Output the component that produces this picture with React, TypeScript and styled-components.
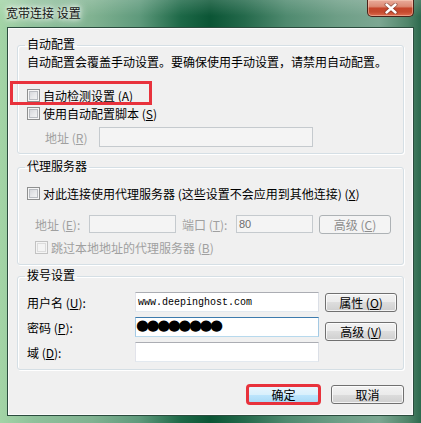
import React from 'react';
import styled, { createGlobalStyle } from 'styled-components';

const Global = createGlobalStyle`
  html, body { margin: 0; padding: 0; }
  body {
    width: 421px; height: 423px; overflow: hidden;
    font-family: "Noto Sans CJK SC", "Liberation Sans", sans-serif;
    font-size: 12px; color: #000;
  }
  * { box-sizing: border-box; }
`;

const Window = styled.div`
  width: 421px;
  height: 423px;
  display: flex;
  flex-direction: column;
  padding: 0 7px 7px 7px;
  background:
    linear-gradient(180deg, rgba(255,255,255,0.16) 0px, rgba(255,255,255,0) 16px),
    linear-gradient(90deg, #a3d4a6 0%, #8fc19b 8%, #80b291 22%, #5f9a7c 33%, #1d6847 43%, #0b5535 50%, #24694b 58%, #4f8a6f 68%, #6d9e86 80%, #7ca792 90%, #4f8469 97%, #2c694d 100%);
`;

const TitleBar = styled.div`
  height: 27px;
  flex: none;
  display: flex;
  justify-content: space-between;
  align-items: flex-start;
`;

const Title = styled.div`
  margin: 5px 0 0 -1px;
  line-height: 16px;
  font-size: 12px;
  color: #151515;
  text-shadow: 0 0 4px #fff, 0 0 8px rgba(255,255,255,0.9), 0 0 12px rgba(255,255,255,0.7);
  white-space: pre;
`;

const CloseButton = styled.div`
  width: 47px;
  height: 17px;
  display: flex;
  align-items: center;
  justify-content: center;
  border: 1px solid #4a2118;
  border-top: none;
  border-radius: 0 0 5px 5px;
  background: linear-gradient(180deg, #e9ab9b 0%, #dc8a74 40%, #c6452b 52%, #c44a2e 75%, #de6d4f 100%);
  box-shadow: inset 0 0 0 1px rgba(255,220,200,0.45);
`;

const Client = styled.div`
  flex: 1;
  display: flex;
  flex-direction: column;
  border: 1px solid #2b4c3e;
  background: #f0f0f0;
  box-shadow: inset 0 0 0 1px #fbfbfb;
  padding: 10px 9px 0 9px;
`;

const Group = styled.fieldset<{ $mt: number; $pb: number }>`
  margin: ${p => p.$mt}px 0 0 0;
  padding: 0 11px ${p => p.$pb}px 9px;
  border: 1px solid #d5dfe5;
  border-radius: 3px;
  box-shadow: inset 1px 1px 0 #fff, 1px 1px 0 #fff;
  min-inline-size: 0;
`;

const Legend = styled.legend`
  padding: 0 2px 3px 2px;
  margin-left: -2px;
  line-height: 12px;
  font-size: 12px;
`;

const Desc = styled.div`
  margin-top: 1px;
  line-height: 16px;
  white-space: nowrap;
`;

const CheckRow = styled.div<{ $mt: number; $indent?: number; $disabled?: boolean }>`
  position: relative;
  display: flex;
  align-items: center;
  gap: 3px;
  height: 16px;
  margin-top: ${p => p.$mt}px;
  padding-left: ${p => p.$indent || 0}px;
  color: ${p => (p.$disabled ? '#a0a0a0' : '#000')};
  white-space: nowrap;
`;

const Box = styled.span<{ $disabled?: boolean }>`
  width: 13px;
  height: 13px;
  flex: none;
  border: 1px solid ${p => (p.$disabled ? '#c2c2c2' : '#8e8f8f')};
  background: ${p =>
    p.$disabled ? '#f4f4f4' : 'linear-gradient(135deg, #cdd0d4 0%, #e6e7e9 50%, #f8f8f8 100%)'};
  box-shadow: inset 0 0 0 1px ${p => (p.$disabled ? '#f4f4f4' : '#f6f6f6')},
    inset 0 0 0 2px ${p => (p.$disabled ? '#dcdcdc' : '#b9bcc1')};
`;

const Highlight = styled.span`
  position: absolute;
  left: -17px;
  top: -6px;
  width: 142px;
  height: 24px;
  border: 3px solid #e8323c;
  pointer-events: none;
`;

const FieldRow = styled.div<{ $mt: number; $indent: number; $h: number }>`
  display: flex;
  align-items: flex-start;
  height: ${p => p.$h}px;
  margin-top: ${p => p.$mt}px;
  padding-left: ${p => p.$indent}px;
  white-space: nowrap;
`;

const Label = styled.span<{ $w?: number; $disabled?: boolean; $ml?: number; $h?: number }>`
  flex: none;
  width: ${p => (p.$w ? `${p.$w}px` : 'auto')};
  margin-left: ${p => p.$ml || 0}px;
  height: ${p => p.$h || 20}px;
  display: flex;
  align-items: center;
  color: ${p => (p.$disabled ? '#a0a0a0' : '#000')};
  white-space: nowrap;
`;

const TextBox = styled.div<{ $w?: number; $h: number; $disabled?: boolean; $focused?: boolean }>`
  flex: none;
  width: ${p => (p.$w ? `${p.$w}px` : 'auto')};
  height: ${p => p.$h}px;
  display: flex;
  align-items: center;
  padding-left: 2px;
  border: 1px solid;
  border-color: ${p =>
    p.$disabled
      ? '#c5cace'
      : p.$focused
      ? '#3d7bad #a4c9e3 #b7d9ed #a4c9e3'
      : '#abadb3 #dbdfe6 #e3e9ef #e2e3ea'};
  background: ${p => (p.$disabled ? '#f4f4f4' : '#fff')};
  overflow: hidden;
`;

const MonoText = styled.span`
  font-family: "Liberation Mono", "DejaVu Sans Mono", monospace;
  font-size: 10px;
  color: #000;
`;

const PortText = styled.span`
  font-family: "Liberation Sans", sans-serif;
  font-size: 11px;
  color: #6d6d6d;
`;

const Secret = styled.span`
  font-family: "DejaVu Sans", sans-serif;
  font-size: 15px;
  line-height: 16px;
  margin-top: -5px;
  margin-left: -2px;
  color: #000;
  letter-spacing: -2.5px;
`;

const Button = styled.button<{ $disabled?: boolean; $w?: number; $default?: boolean; $flagged?: boolean }>`
  flex: none;
  width: ${p => p.$w || 72}px;
  height: 19px;
  padding: 0;
  margin: 0;
  font-family: "Noto Sans CJK SC", "Liberation Sans", sans-serif;
  font-size: 12px;
  line-height: 16px;
  border-radius: 3px;
  border: 1px solid ${p => (p.$disabled ? '#adb2b5' : p.$default ? '#3c7fb1' : '#707070')};
  color: ${p => (p.$disabled ? '#8d8d8d' : '#000')};
  background: ${p =>
    p.$disabled
      ? '#f4f4f4'
      : p.$default
      ? 'linear-gradient(180deg, #eaf6fd 0%, #d9f0fc 50%, #bee6fd 50%, #a7d9f5 100%)'
      : 'linear-gradient(180deg, #f2f2f2 0%, #ebebeb 50%, #dddddd 50%, #cfcfcf 100%)'};
  box-shadow: inset 0 0 0 1px ${p => (p.$disabled ? '#f4f4f4' : 'rgba(255,255,255,0.75)')};
  outline: ${p => (p.$flagged ? '3px solid #e8323c' : 'none')};
  outline-offset: -2px;
  white-space: nowrap;
`;

const DialGrid = styled.div`
  display: grid;
  grid-template-columns: 102px 184px 72px;
  grid-template-rows: 20px 20px 20px;
  column-gap: 6px;
  row-gap: 5px;
  margin-top: 8px;
`;

const GridButton = styled.div<{ $row: string; $mt: number }>`
  grid-column: 3;
  grid-row: ${p => p.$row};
  align-self: start;
  margin-top: ${p => p.$mt}px;
  display: flex;
`;

const ButtonBar = styled.div`
  display: flex;
  justify-content: flex-end;
  gap: 11px;
  margin-top: 15px;
`;

const K = ({ k }: { k: string }) => (
  <>
    (<u>{k}</u>)
  </>
);

export default function App() {
  return (
    <>
      <Global />
      <Window>
        <TitleBar>
          <Title>宽带连接 设置</Title>
          <CloseButton>
            <svg width="14" height="11" viewBox="0 0 14 11">
              <path d="M2.5 1.5 L11.5 9.5 M11.5 1.5 L2.5 9.5" stroke="#5a2418" strokeWidth="4" strokeLinecap="round" opacity="0.55" />
              <path d="M2.5 1.5 L11.5 9.5 M11.5 1.5 L2.5 9.5" stroke="#ffffff" strokeWidth="2.4" strokeLinecap="round" />
            </svg>
          </CloseButton>
        </TitleBar>
        <Client>
          <Group $mt={0} $pb={6}>
            <Legend>自动配置</Legend>
            <Desc>自动配置会覆盖手动设置。要确保使用手动设置，请禁用自动配置。</Desc>
            <CheckRow $mt={17}>
              <Box />
              <span>
                自动检测设置 <K k="A" />
              </span>
              <Highlight />
            </CheckRow>
            <CheckRow $mt={2}>
              <Box />
              <span>
                使用自动配置脚本 <K k="S" />
              </span>
            </CheckRow>
            <FieldRow $mt={6} $indent={18} $h={20}>
              <Label $w={54} $disabled>
                地址 <K k="R" />
              </Label>
              <TextBox $w={214} $h={20} $disabled />
            </FieldRow>
          </Group>

          <Group $mt={6} $pb={9}>
            <Legend>代理服务器</Legend>
            <CheckRow $mt={10}>
              <Box />
              <span>
                对此连接使用代理服务器 (这些设置不会应用到其他连接) <K k="X" />
              </span>
            </CheckRow>
            <FieldRow $mt={14} $indent={8} $h={19}>
              <Label $w={54} $h={18} $disabled>
                地址 <K k="E" />:
              </Label>
              <TextBox $w={87} $h={18} $disabled />
              <Label $w={54} $ml={6} $h={18} $disabled>
                端口 <K k="T" />:
              </Label>
              <TextBox $w={77} $h={18} $disabled>
                <PortText>80</PortText>
              </TextBox>
              <Button $disabled style={{ marginLeft: 6 }} type="button">
                高级 <K k="C" />
              </Button>
            </FieldRow>
            <CheckRow $mt={5} $indent={8} $disabled>
              <Box $disabled />
              <span>
                跳过本地地址的代理服务器 <K k="B" />
              </span>
            </CheckRow>
          </Group>

          <Group $mt={4} $pb={7}>
            <Legend>拨号设置</Legend>
            <DialGrid>
              <Label>
                用户名 <K k="U" />:
              </Label>
              <TextBox $h={20}>
                <MonoText>www.deepinghost.com</MonoText>
              </TextBox>
              <GridButton $row="1" $mt={1}>
                <Button type="button">
                  属性 <K k="O" />
                </Button>
              </GridButton>
              <Label>
                密码 <K k="P" />:
              </Label>
              <TextBox $h={20} $focused>
                <Secret>●●●●●●●●</Secret>
              </TextBox>
              <GridButton $row="2 / span 2" $mt={5}>
                <Button type="button">
                  高级 <K k="V" />
                </Button>
              </GridButton>
              <Label>
                域 <K k="D" />:
              </Label>
              <TextBox $h={20} />
            </DialGrid>
          </Group>

          <ButtonBar>
            <Button $w={73} $default $flagged type="button">
              确定
            </Button>
            <Button $w={73} type="button">
              取消
            </Button>
          </ButtonBar>
        </Client>
      </Window>
    </>
  );
}
